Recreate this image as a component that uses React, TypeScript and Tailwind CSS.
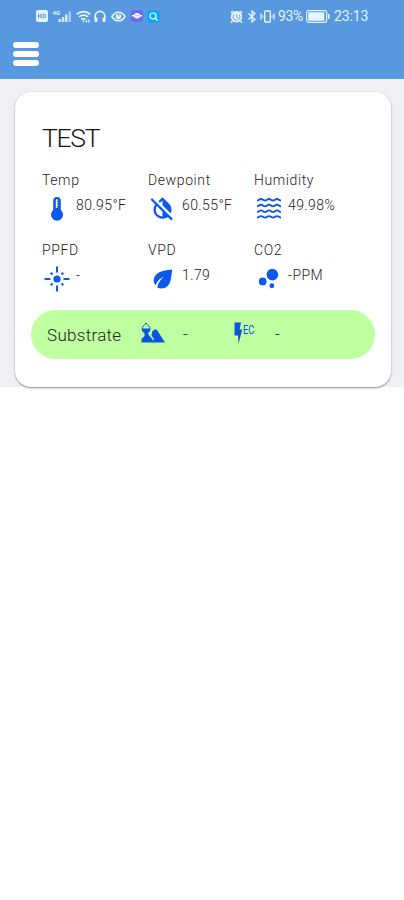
import type { ReactNode } from "react";
import { MdBubbleChart, MdInvertColorsOff } from "react-icons/md";

interface Reading {
  label: string;
  value: string;
  icon: ReactNode;
}

const ThermometerIcon = () => (
  <svg viewBox="0 0 12 24" className="h-6 w-3">
    <path
      d="M6 0a3.800 3.800 0 0 0-3.800 3.800v9.300a6 6 0 1 0 7.600 0V3.800A3.800 3.800 0 0 0 6 0Z"
      fill="currentColor"
    />
    <path d="M4.800 3.500a1.200 1.200 0 0 1 2.400 0H6.200V5h1v1.200h-1v1.600h1V9h-1v2H4.800Z" fill="#fff" />
  </svg>
);

const WavesIcon = () => (
  <svg
    viewBox="0 0 24 22"
    className="h-[22px] w-6"
    fill="none"
    stroke="currentColor"
    strokeWidth="1.9"
  >
    {[2.5, 8.2, 13.9, 19.6].map((y) => (
      <path
        key={y}
        d={`M0 ${y}c2 0 2-1.500 4-1.500s2 1.500 4 1.500 2-1.500 4-1.500 2 1.500 4 1.500 2-1.500 4-1.500 2 1.500 4 1.500`}
      />
    ))}
  </svg>
);

const LightIcon = () => (
  <svg
    viewBox="0 0 26 26"
    className="h-[26px] w-[26px]"
    stroke="currentColor"
    strokeWidth="2"
  >
    <circle cx="13" cy="13" r="3.600" fill="currentColor" stroke="none" />
    <path d="M13 0.500v6M13 19.500v6M0.500 13h6M19.500 13h6" />
    <path d="M6.700 6.700l1.900 1.900M17.400 17.400l1.900 1.900M6.700 19.300l1.900-1.900M17.400 8.600l1.900-1.900" />
  </svg>
);

const LeafIcon = () => (
  <svg viewBox="0 0 20 20" className="h-5 w-5">
    <path
      d="M19.500.5C13 1.300 7.500 1.800 3.700 5.100.2 8.200-.3 13.200 2.600 16.200 4.300 11.800 7.300 9 11 7.700 7.600 10.400 5.300 13.500 4.200 18.400c4.100 2.300 9.300.8 11.900-3.200 2.500-3.900 1.800-9 3.400-14.700Z"
      fill="currentColor"
    />
  </svg>
);

const SoilIcon = () => (
  <svg viewBox="0 0 24 21" className="h-[21px] w-6">
    <path
      d="M5 1C3.300 3.200 1.200 4.900 1.200 6.900a3.900 3.900 0 0 0 7.800 0C9 4.900 6.800 3.200 5 1Z"
      fill="none"
      stroke="currentColor"
      strokeWidth="1"
    />
    <path d="M.8 6.500h8.600C9.400 9 7.500 11 5.100 11S.8 9 .8 6.500Z" fill="currentColor" />
    <path d="M3.500 10.500h3.400l.8 2.500 4 4.500v3H.5V17l3-3Z" fill="currentColor" />
    <path
      d="M11.200 9.500 13.500 7.500h2.200L24 20.500H11l2-3.500-2.500-3.500Z"
      fill="currentColor"
    />
  </svg>
);

const EcIcon = () => (
  <div className="-mt-1 flex text-[#0c55df]">
    <svg viewBox="0 0 9 22" className="h-[22px] w-[9px]">
      <path d="M.5.500h6.500L5.700 7.500h2.500L4.500 22l-.5-8.500H.5Z" fill="currentColor" />
    </svg>
    <svg viewBox="0 0 14 17" className="h-[17px] w-3.5">
      <text
        x="0"
        y="11.500"
        textLength="11.500"
        lengthAdjust="spacingAndGlyphs"
        fill="currentColor"
        className="font-['Roboto',sans-serif] text-[12.500px] font-normal"
      >
        EC
      </text>
    </svg>
  </div>
);

const READINGS: Reading[] = [
  { label: "Temp", value: "80.95°F", icon: <ThermometerIcon /> },
  {
    label: "Dewpoint",
    value: "60.55°F",
    icon: <MdInvertColorsOff className="h-[27px] w-[27px]" />,
  },
  { label: "Humidity", value: "49.98%", icon: <WavesIcon /> },
  { label: "PPFD", value: "-", icon: <LightIcon /> },
  { label: "VPD", value: "1.79", icon: <LeafIcon /> },
  {
    label: "CO2",
    value: "-PPM",
    icon: <MdBubbleChart className="h-[29px] w-[29px] shrink-0" />,
  },
];

const StatusBar = () => (
  <div className="flex h-8 items-center pl-9 font-normal text-[#e8f4ff]">
    {/* Network and app icons */}
    <svg viewBox="0 0 12 12" className="h-3 w-3 shrink-0">
      <rect width="12" height="12" rx="2" fill="currentColor" />
      <path
        d="M2.500 3.500v5M5 3.500v5M2.500 6H5M7 4v4h1.500l1-1V5l-1-1Z"
        fill="none"
        stroke="#5798df"
      />
    </svg>
    <svg viewBox="0 0 20 12" className="ml-1 h-3 w-5 shrink-0">
      <text
        x="0.500"
        y="4.800"
        fill="currentColor"
        className="font-['Roboto',sans-serif] text-[6px] font-bold"
      >
        4G
      </text>
      <path d="M6.500 9h2.500v3H6.500ZM9.800 7h2.500v5H9.800ZM13 4.500h2.500V12H13Z" fill="currentColor" opacity=".85" />
      <path d="M16.500 1.500H19V12h-2.500Z" fill="currentColor" opacity=".55" />
    </svg>
    <svg viewBox="0 0 15 13" className="ml-1 h-[13px] w-[15px] shrink-0" fill="none" stroke="currentColor">
      <path d="M.8 4.300a9.500 9.500 0 0 1 13.400 0M3 7a6.300 6.300 0 0 1 9 0M5.200 9.500a3.300 3.300 0 0 1 4 0" strokeWidth="1.700" />
      <path d="M7.500 12.500 6 10.800h3Z" fill="currentColor" stroke="none" />
      <path d="M10.500 9.500v3M13 12.500v-3" strokeWidth="1.300" />
    </svg>
    <svg viewBox="0 0 12 13" className="ml-[3px] h-[13px] w-3 shrink-0" fill="none" stroke="currentColor">
      <path d="M1.200 9V6.200a4.800 4.800 0 0 1 9.600 0V9" strokeWidth="1.600" />
      <path d="M2 7.500V12M10 7.500V12" strokeWidth="2.800" />
    </svg>
    <svg viewBox="0 0 15 11" className="ml-[5px] h-[11px] w-[15px] shrink-0" fill="none" stroke="currentColor">
      <path d="M1 5.500C4.200-.2 10.800-.2 14 5.500 10.800 11.200 4.200 11.200 1 5.500Z" strokeWidth="1.600" />
      <circle cx="7.500" cy="5.500" r="2.800" fill="currentColor" stroke="none" />
      <path d="M7.700 3v2.500" stroke="#5798df" />
    </svg>
    <svg viewBox="0 0 12 12" className="ml-[5px] h-3 w-3 shrink-0">
      <rect width="12" height="12" rx="3" fill="#7565ed" />
      <path d="M2.800 5a3.300 2.500 0 0 1 6.400 0H11v1.500H9.200a3.300 2.500 0 0 1-6.400 0H1V5Z" fill="#fff" />
      <path d="M3.500 5.800h5" stroke="#7565ed" strokeWidth=".6" />
    </svg>
    <svg viewBox="0 0 13 13" className="ml-1 h-[13px] w-[13px] shrink-0">
      <rect width="13" height="13" rx="3" fill="#09a9f5" />
      <circle cx="6" cy="6" r="3" fill="none" stroke="#fff" strokeWidth="1.200" />
      <path d="m8 8 2.500 2.500" stroke="#fff" strokeWidth="1.300" />
    </svg>

    {/* Device icons, battery and clock */}
    <svg viewBox="0 0 13 13" className="ml-[70px] h-[13px] w-[13px] shrink-0">
      <circle cx="6.500" cy="6.800" r="5.700" fill="currentColor" />
      <path d="m.8 3 2.500-2M12.200 3 9.700 1M2.500 11 1 12.500M10.500 11l1.500 1.500" stroke="currentColor" strokeWidth="1.600" />
      <path d="M4 4.500a3.400 3.400 0 1 0 5 0M6.500 4.300V7l1.800.8" fill="none" stroke="#5798df" strokeWidth=".9" />
    </svg>
    <svg viewBox="0 0 10 13" className="ml-1 h-[13px] w-2.5 shrink-0" fill="none" stroke="currentColor" strokeWidth="1.300">
      <path d="m1.500 3.500 6.500 6L5 12V1l3 2.500-6.500 6" />
    </svg>
    <svg viewBox="0 0 15 13" className="ml-[3px] h-[13px] w-[15px] shrink-0" fill="none" stroke="currentColor" strokeWidth="1.400">
      <rect x="4.700" y="1" width="5.600" height="11" rx=".7" />
      <path d="M1 3.500v6M14 3.500v6" strokeWidth="1.300" />
      <path d="M2.900 5v3M12.100 5v3" strokeWidth=".8" />
    </svg>
    <span className="ml-[3px] w-[27px] text-[14px] tracking-[-0.4px]">93%</span>
    <svg viewBox="0 0 25 13" className="ml-px h-[13px] w-[25px] shrink-0">
      <rect x=".7" y=".7" width="20" height="11.600" rx="2" fill="none" stroke="currentColor" strokeWidth="1.200" />
      <rect x="2.300" y="2.300" width="16" height="8.400" rx=".5" fill="currentColor" />
      <path d="M22.800 4v5" stroke="currentColor" strokeWidth="1.500" />
    </svg>
    <span className="ml-[3px] text-[14px] tracking-[-0.1px]">23:13</span>
  </div>
);

const ReadingItem = ({ label, value, icon }: Reading) => (
  <div className="h-[70px]">
    <div className="text-[14px] leading-4 tracking-[0.6px]">{label}</div>
    <div className="mt-1.5 flex">
      <div className="mt-px flex h-[27px] w-[29px] items-center justify-center text-[#0d59ea]">
        {icon}
      </div>
      <div className="ml-[5px] mt-px text-[14px] leading-5 tracking-[0.4px]">
        {value}
      </div>
    </div>
  </div>
);

const App = () => {
  return (
    <div className="min-h-screen bg-white font-['Roboto',sans-serif] font-light text-[#222]">
      <header className="h-[79px] bg-[#5798df]">
        <StatusBar />
        <button aria-label="Menu" className="ml-[13px] mt-[10px] block space-y-[3px]">
          <span className="block h-1.5 w-[26px] rounded-sm bg-white" />
          <span className="block h-1.5 w-[26px] rounded-sm bg-white" />
          <span className="block h-1.5 w-[26px] rounded-sm bg-white" />
        </button>
      </header>

      <main className="h-[308px] bg-[#efeff4] pl-[15px] pr-[13px] pt-[13px]">
        <section className="h-[295px] rounded-2xl bg-white px-4 pt-[30px] shadow-[0_1px_2px_#8b8b90]">
          <h1 className="ml-[11px] text-[26.500px] leading-8 tracking-[-1.300px] text-[#151515]">
            TEST
          </h1>

          {/* Sensor readings */}
          <div className="ml-[11px] mt-[18px] grid grid-cols-[106px_106px_106px]">
            {READINGS.map((reading) => (
              <ReadingItem key={reading.label} {...reading} />
            ))}
          </div>

          <div className="-mt-[2px] flex h-[49px] items-center rounded-full bg-[#bfffa0] pl-4">
            <span className="mt-0.5 w-[94px] text-[17px] tracking-[0.3px]">Substrate</span>
            <div className="-mt-1 text-[#0c55df]">
              <SoilIcon />
            </div>
            <span className="ml-[18px] w-[51px] text-[17px]">-</span>
            <EcIcon />
            <span className="ml-[18px] text-[17px]">-</span>
          </div>
        </section>
      </main>
    </div>
  );
};

export default App;
